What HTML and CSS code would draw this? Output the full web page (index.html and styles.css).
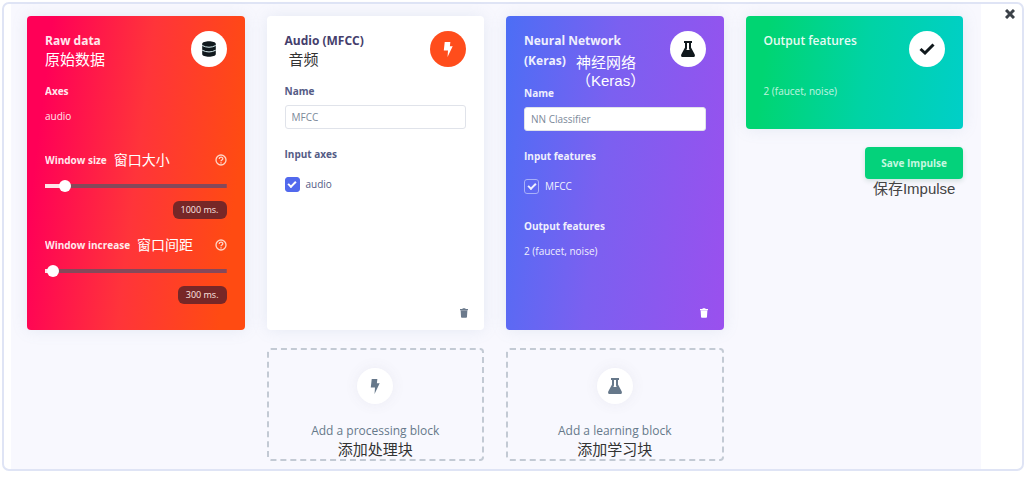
FILE: index.html
```
<!DOCTYPE html>
<html lang="en">
  <head>
    <meta charset="utf-8">
    <title>Create impulse</title>
    <link rel="stylesheet" href="styles.css">
  </head>
  <body>
    <!-- Shared icons -->
    <svg class="sprite" aria-hidden="true">
      <symbol id="icon-bolt" viewBox="0 0 10 16">
        <path d="M1.500 0h6L7 4.500h3L4.500 16 5 9H.5z"/>
      </symbol>
      <symbol id="icon-flask" viewBox="0 0 14 16">
        <path fill-rule="evenodd" d="M3 0h8v2h-1v4.500l3.500 6.500c.9 1.600.3 3-1.500 3H2c-1.800 0-2.400-1.400-1.500-3L4 6.500V2H3zM6 2v5.500L5.400 9h3.200L8 7.500V2z"/>
      </symbol>
      <symbol id="icon-trash" viewBox="0 0 10 12">
        <path d="M0 1h3l.5-1h3L7 1h3v1.500H0zM.8 3h8.400L8.700 11q-.1 1-1 1H2.300q-.9 0-1-1z"/>
      </symbol>
      <symbol id="icon-help" viewBox="0 0 12 12">
        <circle cx="6" cy="6" r="5" fill="none" stroke="currentColor" stroke-width="1.300"/>
        <path d="M4.200 4.900C4.200 2.600 7.800 2.600 7.800 4.700 7.800 6 6 5.900 6 7.200M6 8.200v1.200" fill="none" stroke="currentColor" stroke-width="1.300"/>
      </symbol>
    </svg>

    <main class="frame">
      <div class="board">
        <section class="card card-raw">
          <header class="card-header">
            <div>
              <h2>Raw data</h2>
              <p class="caption">原始数据</p>
            </div>
            <span class="badge">
              <svg width="14" height="16" viewBox="0 0 14 16">
                <path d="M.2 3C.2-.6 13.800-.6 13.800 3v10c0 3.600-13.600 3.600-13.600 0z"/>
                <path d="M.2 4.500Q7 8 13.800 4.500M.2 9.200Q7 12.700 13.800 9.200" fill="none" stroke="#d5eaec"/>
              </svg>
            </span>
          </header>
          <h3>Axes</h3>
          <p class="value">audio</p>

          <div class="slider first">
            <div class="slider-label">
              <label for="window-size">Window size</label>
              <span class="caption">窗口大小</span>
              <button class="icon-button help" type="button" aria-label="Help on window size"><svg width="12" height="12"><use href="#icon-help"/></svg></button>
            </div>
            <input type="range" id="window-size" min="0" max="100" value="8" style="--fill: 11%">
            <output for="window-size">1000 ms.</output>
          </div>

          <div class="slider">
            <div class="slider-label">
              <label for="window-increase">Window increase</label>
              <span class="caption">窗口间距</span>
              <button class="icon-button help" type="button" aria-label="Help on window increase"><svg width="12" height="12"><use href="#icon-help"/></svg></button>
            </div>
            <input type="range" id="window-increase" min="0" max="100" value="1" style="--fill: 4%">
            <output for="window-increase">300 ms.</output>
          </div>
        </section>

        <section class="card card-audio">
          <header class="card-header">
            <div>
              <h2>Audio (MFCC)</h2>
              <p class="caption indent">音频</p>
            </div>
            <span class="badge badge-orange">
              <svg width="10" height="15"><use href="#icon-bolt"/></svg>
            </span>
          </header>
          <label class="field-label" for="audio-name">Name</label>
          <input type="text" id="audio-name" value="MFCC">
          <h3 class="group">Input axes</h3>
          <label class="check"><input type="checkbox" checked>audio</label>
          <button class="icon-button trash" type="button" aria-label="Delete audio block"><svg width="8" height="10"><use href="#icon-trash"/></svg></button>
        </section>

        <section class="card card-nn">
          <header class="card-header">
            <div>
              <h2>Neural Network<br>(Keras)</h2>
              <p class="caption note">神经网络<br>（Keras）</p>
            </div>
            <span class="badge">
              <svg width="14" height="16"><use href="#icon-flask"/></svg>
            </span>
          </header>
          <label class="field-label" for="nn-name">Name</label>
          <input type="text" id="nn-name" value="NN Classifier">
          <h3 class="group">Input features</h3>
          <label class="check"><input type="checkbox" checked>MFCC</label>
          <h3 class="outputs">Output features</h3>
          <p class="value">2 (faucet, noise)</p>
          <button class="icon-button trash" type="button" aria-label="Delete neural network block"><svg width="8" height="10"><use href="#icon-trash"/></svg></button>
        </section>

        <div class="output-column">
          <section class="card card-output">
            <header class="card-header">
              <h2>Output features</h2>
              <span class="badge">
                <svg width="16" height="12" viewBox="0 0 16 12"><path d="M1.500 6l4.500 4L14.500 1.500" fill="none" stroke="currentColor" stroke-width="3"/></svg>
              </span>
            </header>
            <p>2 (faucet, noise)</p>
          </section>
          <div class="save">
            <button class="save-button" type="button">Save Impulse</button>
            <p class="caption">保存Impulse</p>
          </div>
        </div>

        <button class="add-block add-processing" type="button">
          <span class="badge"><svg width="10" height="15"><use href="#icon-bolt"/></svg></span>
          <span class="add-text">Add a processing block</span>
          <span class="caption">添加处理块</span>
        </button>

        <button class="add-block add-learning" type="button">
          <span class="badge"><svg width="14" height="16"><use href="#icon-flask"/></svg></span>
          <span class="add-text">Add a learning block</span>
          <span class="caption">添加学习块</span>
        </button>
      </div>
      <button class="icon-button close" type="button" aria-label="Close">
        <svg width="10" height="10" viewBox="0 0 10 10"><path d="M1 1l8 8M9 1L1 9" fill="none" stroke="currentColor" stroke-width="3"/></svg>
      </button>
    </main>
  </body>
</html>
```
FILE: styles.css
```
* {
  box-sizing: border-box;
}
body {
  margin: 0;
  background-color: #ffffff;
  font-family: "Open Sans", "Noto Sans CJK SC", sans-serif;
  font-size: 10px;
  line-height: 16px;
}
h2,
h3,
p {
  margin: 0;
}
h2 {
  font-size: 12px;
  font-weight: 700;
  line-height: 20px;
}
h3,
label {
  font-size: 10px;
  font-weight: 700;
}
svg {
  display: block;
  fill: currentColor;
}
button,
input {
  font-family: inherit;
}
.sprite {
  position: absolute;
  width: 0;
  height: 0;
}
.frame {
  display: flex;
  margin: 2px 0 0 2px;
  padding-left: 7px;
  border: 2px solid #dfe4f5;
  border-radius: 7px;
}
.board {
  flex: 1;
  display: grid;
  grid-template-columns: repeat(4, minmax(0, 1fr));
  gap: 18px 22px;
  padding: 12px 18px 8px 16px;
  background-color: #f8f8fe;
}
.caption {
  font-family: "Liberation Sans", "Noto Sans CJK SC", sans-serif;
  font-size: 15px;
  font-weight: 400;
  line-height: 18px;
}
.icon-button {
  padding: 0;
  border: none;
  background: none;
  color: inherit;
}
.close {
  align-self: flex-start;
  margin: 5px 7px 0 24px;
  color: #3b4148;
}

/* Cards */
.card {
  display: flex;
  flex-direction: column;
  padding: 15px 18px 12px;
  border-radius: 4px;
  color: #ffffff;
  box-shadow: 0 0 16px rgba(120, 150, 180, 0.15);
}
.card h2,
.card h3,
.card label,
.card .value {
  opacity: 0.9;
}
.card-raw {
  background: linear-gradient(97deg, #ff0057 10%, #ff343a 50%, #ff4b12 90%);
}
.card-audio {
  background-color: #ffffff;
  color: #424a78;
}
.card-nn {
  background: linear-gradient(97deg, #4c6ef5 0%, #7b60f0 45%, #9a50ee 100%);
}
.card-output {
  padding-bottom: 30px;
  background: linear-gradient(97deg, #00d572 10%, #00d3a5 55%, #00cfc8 100%);
}
.card-output h2 {
  font-weight: 600;
}
.card-output p {
  opacity: 0.75;
}
.card-header {
  position: relative;
  display: flex;
  justify-content: space-between;
  min-height: 38px;
  margin-bottom: 14px;
}
.card-audio h2 {
  color: #302a5c;
}
.card-audio .caption {
  color: #333333;
}
.indent {
  padding-left: 4px;
}
/* Translation sits beside the second title line */
.note {
  position: absolute;
  top: 23px;
  left: 52px;
}
.badge {
  display: flex;
  flex: none;
  align-items: center;
  justify-content: center;
  width: 36px;
  height: 36px;
  border-radius: 50%;
  background-color: #ffffff;
  color: #10181c;
}
.badge-orange {
  background-color: #ff4d1c;
  color: #ffffff;
}
.value {
  margin-top: 9px;
}
.group {
  margin-top: 17px;
}
.outputs {
  margin-top: 24px;
}
.trash {
  align-self: flex-end;
  margin-top: auto;
  margin-right: -2px;
}
.card-audio .trash {
  color: #6b7a8c;
}

/* Form controls */
input[type="text"] {
  width: 100%;
  height: 24px;
  margin-top: 6px;
  padding: 0 6px;
  border: 1px solid #e0e3ea;
  border-radius: 3px;
  background-color: #ffffff;
  color: #7b8999;
  font-size: 10px;
}
.check {
  display: flex;
  align-items: center;
  gap: 6px;
  margin-top: 14px;
  font-weight: 400;
}
input[type="checkbox"] {
  appearance: none;
  display: grid;
  place-items: center;
  width: 15px;
  height: 15px;
  margin: 0;
  border: 1px solid #4059ec;
  border-radius: 3px;
  background-color: #4059ec;
}
input[type="checkbox"]::before {
  content: "";
  width: 6px;
  height: 3px;
  margin-bottom: 2px;
  border-left: 2px solid #ffffff;
  border-bottom: 2px solid #ffffff;
  transform: rotate(-45deg);
}
.card-nn input[type="checkbox"] {
  border-color: #b0b8fa;
  background-color: transparent;
}
.slider {
  display: flex;
  flex-direction: column;
  margin-top: 18px;
}
.slider.first {
  margin-top: 28px;
}
.slider:last-child {
  margin-bottom: 14px;
}
.slider-label {
  display: flex;
  align-items: center;
  gap: 7px;
  height: 16px;
}
.slider-label .caption {
  font-size: 14px;
}
.help {
  margin-left: auto;
  color: #ffd5c5;
}
input[type="range"] {
  appearance: none;
  width: 100%;
  height: 12px;
  margin: 12px 0 9px;
  background: linear-gradient(to right, #ffe3e8 var(--fill), #85495a var(--fill)) center / 100% 4px no-repeat;
}
input[type="range"]::-webkit-slider-thumb {
  appearance: none;
  width: 12px;
  height: 12px;
  border-radius: 50%;
  background-color: #ffffff;
}
output {
  align-self: flex-end;
  padding: 0 8px;
  border-radius: 6px;
  background-color: #772727;
  color: #ffe6e2;
  font-size: 9px;
  line-height: 18px;
}

/* Output column */
.output-column {
  display: flex;
  flex-direction: column;
  gap: 18px;
}
.save {
  align-self: flex-end;
  text-align: center;
}
.save-button {
  display: block;
  padding: 0 16px;
  border: none;
  border-radius: 4px;
  background-color: #04d27b;
  color: #c5f8e0;
  font-size: 10px;
  font-weight: 700;
  line-height: 32px;
  box-shadow: 0 2px 5px rgba(0, 80, 50, 0.15);
}
.save .caption {
  margin-top: 1px;
  color: #444444;
}

/* Dashed placeholders */
.add-block {
  display: flex;
  flex-direction: column;
  align-items: center;
  padding: 18px 0 0;
  border: 2px dashed #c3cad4;
  border-radius: 4px;
  background: none;
}
.add-processing {
  grid-column: 2;
}
.add-learning {
  grid-column: 3;
}
.add-block .badge {
  margin-bottom: 17px;
  color: #66788a;
  box-shadow: 0 0 14px rgba(90, 90, 120, 0.08);
}
.add-text {
  color: #66788a;
  font-size: 12px;
  line-height: 20px;
}
.add-block .caption {
  color: #333333;
}
```
